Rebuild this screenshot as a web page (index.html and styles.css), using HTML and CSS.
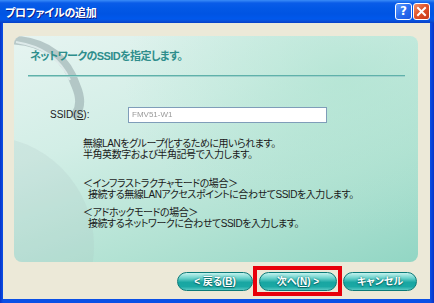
FILE: index.html
```html
<!DOCTYPE html>
<html lang="ja">
<head>
<meta charset="utf-8">
<link rel="stylesheet" href="styles.css">
</head>
<body>
<div class="window">
  <div class="titlebar">
    <span class="title">プロファイルの追加</span>
    <div class="tbtns">
      <span class="tbtn help">?</span>
      <span class="tbtn close"><svg width="11" height="11" viewBox="0 0 11 11"><path d="M2 2 L9 9 M9 2 L2 9" stroke="#fff" stroke-width="2" stroke-linecap="square"/></svg></span>
    </div>
  </div>
  <div class="body">
    <div class="panel">
      <svg class="swoosh" width="404" height="226" viewBox="0 0 404 226">
        <path d="M0 4 C30 6 52 20 62 50 C68 64 66 72 62 78" fill="none" stroke="#98acae" stroke-width="9" stroke-opacity="0.6" stroke-linecap="round"/>
        <path d="M2 6 C28 10 46 22 56 44" fill="none" stroke="#eef8f8" stroke-width="2" stroke-opacity="0.7"/>
        <circle cx="-30" cy="210" r="110" fill="#a9bcbc" fill-opacity="0.18"/>
      </svg>
      <h1 class="heading">ネットワークのSSIDを指定します。</h1>
      <div class="rule"></div>
      <div class="field">
        <span class="label">SSID(<u>S</u>):</span>
        <div class="input"><span class="value">FMV51-W1</span></div>
      </div>
      <div class="desc">
        <p class="para">無線LANをグループ化するために用いられます。<br>半角英数字および半角記号で入力します。</p>
        <p class="para p2">＜インフラストラクチャモードの場合＞<br><span class="ind">接続する無線LANアクセスポイントに合わせてSSIDを入力します。</span></p>
        <p class="para p3">＜アドホックモードの場合＞<br><span class="ind">接続するネットワークに合わせてSSIDを入力します。</span></p>
      </div>
    </div>
    <div class="buttons">
      <span class="btn">&lt; 戻る(<u>B</u>)</span>
      <span class="btn next">次へ(<u>N</u>) &gt;</span>
      <span class="btn cancel">キャンセル</span>
    </div>
  </div>
</div>
</body>
</html>
```

FILE: styles.css
```css
html, body {
  margin: 0;
  padding: 0;
}
body {
  width: 434px;
  height: 303px;
  overflow: hidden;
  font-family: "Liberation Sans", "Noto Sans CJK JP", sans-serif;
  font-feature-settings: "palt";
}
.window {
  width: 434px;
  height: 303px;
  display: flex;
  flex-direction: column;
  background: linear-gradient(to right, #0733c8 0, #0a50e6 3px, #0a50e6 430px, #0733c8 434px);
}
.titlebar {
  height: 23px;
  flex: none;
  display: flex;
  align-items: center;
  justify-content: space-between;
  padding: 0 4px 0 5px;
  background: linear-gradient(to bottom, #3a8cf8 0, #0a5ce8 3px, #0258e6 8px, #0054e3 14px, #0058ec 19px, #0a4fd8 21px, #0640c8 23px);
}
.title {
  color: #fff;
  font-size: 11px;
  font-weight: bold;
  letter-spacing: -0.2px;
  text-shadow: 1px 1px 0 #0a1f8a;
  margin-top: 1px;
}
.tbtns {
  display: flex;
  gap: 1px;
}
.tbtn {
  width: 15px;
  height: 15px;
  border: 1px solid #fff;
  border-radius: 3px;
  display: flex;
  align-items: center;
  justify-content: center;
  box-sizing: content-box;
}
.help {
  background: linear-gradient(135deg, #5f9cff 0, #2a6ef0 50%, #1a55e0 100%);
  color: #fff;
  font-family: "DejaVu Sans", sans-serif;
  font-weight: bold;
  font-size: 12px;
  line-height: 15px;
}
.close {
  background: linear-gradient(135deg, #f2926c 0, #e0542a 45%, #c8381a 100%);
}
.body {
  flex: 1;
  margin: 0 4px 4px 3px;
  background: #ece9d8;
  padding: 13px 12px 0 11px;
  display: flex;
  flex-direction: column;
}
.panel {
  position: relative;
  height: 226px;
  border-radius: 8px;
  overflow: hidden;
  background:
    radial-gradient(ellipse 220px 160px at 330px 40px, rgba(170, 226, 206, 0.6), rgba(170, 226, 206, 0) 100%),
    linear-gradient(160deg, #e6f4f1 0%, #d2eee6 35%, #b2e2d3 70%, #92d6c4 100%);
  padding: 13px 13px 0 14px;
  box-sizing: border-box;
}
.swoosh {
  position: absolute;
  left: 0;
  top: 0;
  pointer-events: none;
}
.heading {
  position: relative;
  margin: 0 0 0 2px;
  font-size: 11px;
  line-height: 14px;
  font-weight: bold;
  color: #2e8e8c;
  letter-spacing: -0.6px;
}
.rule {
  position: relative;
  height: 1px;
  margin-top: 12px;
  background: #5fb2aa;
  border-bottom: 1px solid rgba(255, 255, 255, 0.4);
}
.field {
  position: relative;
  display: flex;
  align-items: center;
  margin-top: 30px;
  margin-left: 22px;
}
.label {
  width: 78px;
  font-size: 10px;
  line-height: 12px;
  color: #222;
}
.input {
  width: 194px;
  height: 14px;
  border: 1px solid #7f9db9;
  background: #fff;
  display: flex;
  align-items: center;
  padding-left: 3px;
  box-sizing: content-box;
}
.value {
  font-size: 8px;
  line-height: 10px;
  color: #9a9a9a;
  filter: blur(0.3px);
}
.desc {
  position: relative;
  margin-left: 55px;
  margin-top: 15px;
}
.para {
  margin: 0;
  font-size: 10px;
  line-height: 11px;
  color: #1a1a1a;
  letter-spacing: -0.45px;
}
.p2 {
  margin-top: 18px;
}
.p3 {
  margin-top: 7px;
}
.ind {
  padding-left: 5px;
}
.buttons {
  display: flex;
  justify-content: flex-end;
  gap: 6px;
  margin-top: 10px;
  padding-right: 1px;
}
.btn {
  position: relative;
  width: 76px;
  height: 19px;
  box-sizing: border-box;
  border: 1px solid #0c7a78;
  border-radius: 10px;
  display: flex;
  align-items: center;
  justify-content: center;
  font-size: 10px;
  line-height: 12px;
  font-weight: bold;
  color: #fff;
  text-shadow: 0 0 2px #0a6a68, 0 1px 1px #0a6a68;
  background: linear-gradient(to bottom, #c4f2ee 0%, #6ad2cc 30%, #18a6a2 55%, #1aa8a4 80%, #58c8c2 100%);
}
.next {
  width: 78px;
}
.cancel {
  width: 74px;
}
.next::after {
  content: "";
  position: absolute;
  left: -7px;
  right: -6px;
  top: -7px;
  bottom: -6px;
  border: 4px solid #e8000a;
}
```
